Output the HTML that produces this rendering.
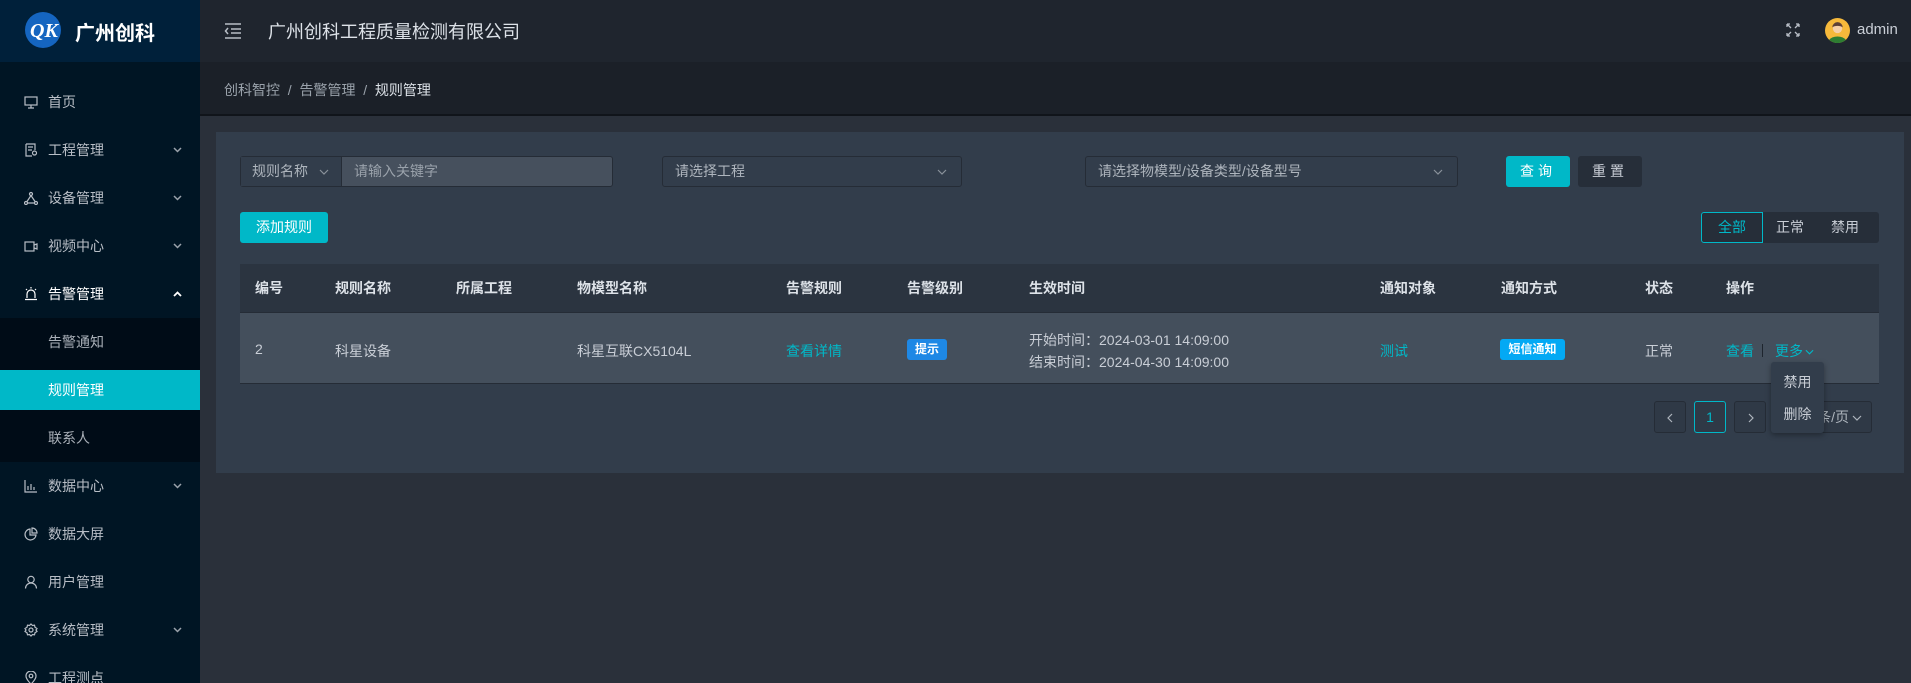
<!DOCTYPE html>
<html style="overflow:hidden"><head><meta charset="utf-8"><style>
*{margin:0;padding:0;box-sizing:border-box}
html,body{width:1911px;height:683px;overflow:hidden}
body{background:#2a303a;font-family:"Liberation Sans","Noto Sans CJK SC",sans-serif;font-size:14px;color:#c9ced6;position:relative}
.a{position:absolute}
.side{left:0;top:0;width:200px;height:683px;background:#001524}
.logo{left:0;top:0;width:200px;height:62px;background:#00203a}
.mi{position:absolute;left:0;width:200px;height:48px;line-height:48px;color:#b8bec6;font-size:14px}
.mi .t{position:absolute;left:48px}
.mi .ic{position:absolute;left:24px;top:17px;width:14px;height:14px}
.mi .ar{position:absolute;left:173px;top:21px;width:9px;height:6px}
.hdr{left:200px;top:0;width:1711px;height:62px;background:#1f252e}
.bc{left:200px;top:62px;width:1711px;height:54px;background:#1b2028;border-bottom:2px solid #10141a}
.card{left:216px;top:132px;width:1688px;height:341px;background:#323d4b}
.inp{border:1px solid #252c36;border-radius:3px;background:#323d4b;height:31px;line-height:29px;color:#aeb5bd;font-size:14px;padding-left:12px}
.th{position:absolute;top:0;line-height:49px;font-weight:bold;color:#dde2e8}
.td{position:absolute;color:#c9ced6}
.pg{position:absolute;top:401px;height:32px;border:1px solid #252c36;border-radius:3px;background:#2f3946;text-align:center;line-height:30px;color:#aeb5bd}
.chev{position:absolute;width:10px;height:6px}
</style></head><body>
<div class="a side"></div>
<div class="a logo">
 <svg class="a" style="left:24px;top:11px" width="38" height="38" viewBox="0 0 38 38"><circle cx="19" cy="19" r="18" fill="#1565c0"/><text x="6" y="26" font-size="20" font-style="italic" font-weight="bold" fill="#fff" font-family="Liberation Serif">QK</text></svg>
 <div class="a" style="left:75px;top:17px;font-size:20px;font-weight:bold;color:#fff">广州创科</div>
</div>
<div class="mi" style="top:78px"><svg class="ic" viewBox="0 0 14 14" fill="none" stroke="#b8bec6" stroke-width="1.2"><rect x="1" y="2" width="12" height="8"/><path d="M4 13h6M7 10v3"/></svg><span class="t">首页</span></div>
<div class="mi" style="top:126px"><svg class="ic" viewBox="0 0 14 14" fill="none" stroke="#b8bec6" stroke-width="1.2"><path d="M2 1h9v6M2 1v12h6M4 4h5M4 7h4"/><circle cx="10.5" cy="10" r="2"/></svg><span class="t">工程管理</span><svg class="ar" viewBox="0 0 9 6" fill="none" stroke="#9aa2ab" stroke-width="1.5"><path d="M1 1l3.5 3.5L8 1"/></svg></div>
<div class="mi" style="top:174px"><svg class="ic" viewBox="0 0 14 14" fill="none" stroke="#b8bec6" stroke-width="1.2"><circle cx="7" cy="3" r="1.5"/><circle cx="2" cy="12" r="1.5"/><circle cx="12" cy="12" r="1.5"/><path d="M7 4.5L3 10.5M7 4.5l4 6M3.5 12h7"/></svg><span class="t">设备管理</span><svg class="ar" viewBox="0 0 9 6" fill="none" stroke="#9aa2ab" stroke-width="1.5"><path d="M1 1l3.5 3.5L8 1"/></svg></div>
<div class="mi" style="top:222px"><svg class="ic" viewBox="0 0 14 14" fill="none" stroke="#b8bec6" stroke-width="1.2"><rect x="1" y="3" width="9" height="9"/><path d="M10 6l3-1v5l-3-1"/></svg><span class="t">视频中心</span><svg class="ar" viewBox="0 0 9 6" fill="none" stroke="#9aa2ab" stroke-width="1.5"><path d="M1 1l3.5 3.5L8 1"/></svg></div>
<div class="mi" style="top:270px;color:#fff"><svg class="ic" viewBox="0 0 14 14" fill="none" stroke="#fff" stroke-width="1.2"><path d="M3 11V7a4 4 0 0 1 8 0v4M1 12.5h12M7 0v1.5M2 2l1 1M12 2l-1 1"/></svg><span class="t">告警管理</span><svg class="ar" viewBox="0 0 9 6" fill="none" stroke="#fff" stroke-width="1.8"><path d="M1 5l3.5-3.5L8 5"/></svg></div>
<div class="a" style="left:0;top:318px;width:200px;height:144px;background:#000c17"></div>
<div class="mi" style="top:318px;color:#a9b0b8"><span class="t">告警通知</span></div>
<div class="mi" style="top:370px;height:40px;line-height:40px;background:#00b8c8;color:#fff"><span class="t">规则管理</span></div>
<div class="mi" style="top:414px;color:#a9b0b8"><span class="t">联系人</span></div>
<div class="mi" style="top:462px"><svg class="ic" viewBox="0 0 14 14" fill="none" stroke="#b8bec6" stroke-width="1.2"><path d="M1 1v12h12M4 11V7M7 11V5M10 11V8"/></svg><span class="t">数据中心</span><svg class="ar" viewBox="0 0 9 6" fill="none" stroke="#9aa2ab" stroke-width="1.5"><path d="M1 1l3.5 3.5L8 1"/></svg></div>
<div class="mi" style="top:510px"><svg class="ic" viewBox="0 0 14 14" fill="none" stroke="#b8bec6" stroke-width="1.2"><path d="M6 2a5.5 5.5 0 1 0 6 6H6z"/><path d="M8 1v5h5a5 5 0 0 0-5-5z"/></svg><span class="t">数据大屏</span></div>
<div class="mi" style="top:558px"><svg class="ic" viewBox="0 0 14 14" fill="none" stroke="#b8bec6" stroke-width="1.2"><circle cx="7" cy="4.5" r="3.2"/><path d="M1.5 13.5a5.5 5.5 0 0 1 11 0"/></svg><span class="t">用户管理</span></div>
<div class="mi" style="top:606px"><svg class="ic" viewBox="0 0 14 14" fill="none" stroke="#b8bec6" stroke-width="1.2"><circle cx="7" cy="7" r="2"/><path d="M7 1l1.5 1.5 2-.3.5 2L13 5.5l-1 1.5 1 1.5-2 1.3-.5 2-2-.3L7 13l-1.5-1.5-2 .3-.5-2L1 8.5 2 7 1 5.5l2-1.3.5-2 2 .3z"/></svg><span class="t">系统管理</span><svg class="ar" viewBox="0 0 9 6" fill="none" stroke="#9aa2ab" stroke-width="1.5"><path d="M1 1l3.5 3.5L8 1"/></svg></div>
<div class="mi" style="top:654px"><svg class="ic" viewBox="0 0 14 14" fill="none" stroke="#b8bec6" stroke-width="1.2"><path d="M7 13s5-4.5 5-8a5 5 0 0 0-10 0c0 3.5 5 8 5 8z"/><circle cx="7" cy="5" r="1.8"/></svg><span class="t">工程测点</span></div>

<div class="a hdr">
 <svg class="a" style="left:24px;top:23px" width="18" height="16" viewBox="0 0 18 16" fill="none" stroke="#b8bec6" stroke-width="1.5"><path d="M1 1h16M7 6h10M7 10h10M1 15h16M4 5L1.5 8 4 11"/></svg>
 <div class="a" style="left:68px;top:18px;font-size:18px;color:#dde2e8">广州创科工程质量检测有限公司</div>
 <svg class="a" style="left:1586px;top:23px" width="14" height="14" viewBox="0 0 14 14" fill="none" stroke="#b8bec6" stroke-width="1.3"><path d="M1 1l4 4M1 1h3M1 1v3M13 1L9 5M13 1h-3M13 1v3M1 13l4-4M1 13h3M1 13v-3M13 13l-4-4M13 13h-3M13 13v-3"/></svg>
 <svg class="a" style="left:1625px;top:18px" width="25" height="25" viewBox="0 0 24 24"><circle cx="12" cy="12" r="12" fill="#f6b93b"/><path d="M4 21a9 6 0 0 1 16 0a12 12 0 0 1-16 0z" fill="#2e7d32"/><circle cx="12" cy="10" r="4.5" fill="#f5d0a9"/><path d="M7 9a5 5 0 0 1 10 0c-2-2-8-2-10 0z" fill="#5d4037"/></svg>
 <div class="a" style="left:1657px;top:21px;font-size:15px;color:#c9ced6">admin</div>
</div>
<div class="a bc"><div class="a" style="left:24px;top:18px;font-size:14px;color:#9aa2ab">创科智控 &nbsp;/&nbsp; 告警管理 &nbsp;/&nbsp; <span style="color:#dde2e8">规则管理</span></div></div>

<div class="a card"></div>
<div class="a inp" style="left:240px;top:156px;width:373px;background:#46505d;padding:0"><div class="a" style="left:0;top:0;width:101px;height:29px;background:#323d4b;border-right:1px solid #252c36;padding-left:11px">规则名称</div><svg class="chev" style="left:78px;top:12px" viewBox="0 0 10 6" fill="none" stroke="#8a929b" stroke-width="1.2"><path d="M1 1l4 4 4-4"/></svg><span class="a" style="left:113px;top:0;color:#9aa2ab">请输入关键字</span></div>
<div class="a inp" style="left:662px;top:156px;width:300px">请选择工程<svg class="chev" style="right:14px;top:12px" viewBox="0 0 10 6" fill="none" stroke="#8a929b" stroke-width="1.2"><path d="M1 1l4 4 4-4"/></svg></div>
<div class="a inp" style="left:1085px;top:156px;width:373px">请选择物模型/设备类型/设备型号<svg class="chev" style="right:14px;top:12px" viewBox="0 0 10 6" fill="none" stroke="#8a929b" stroke-width="1.2"><path d="M1 1l4 4 4-4"/></svg></div>
<div class="a" style="left:1506px;top:156px;width:64px;height:31px;background:#00b8c8;border-radius:3px;color:#fff;text-align:center;line-height:31px;letter-spacing:4px">查询</div>
<div class="a" style="left:1578px;top:156px;width:64px;height:31px;background:#262e39;border-radius:3px;color:#c9ced6;text-align:center;line-height:31px;letter-spacing:4px">重置</div>
<div class="a" style="left:240px;top:212px;width:88px;height:31px;background:#00b8c8;border-radius:3px;color:#fff;text-align:center;line-height:31px">添加规则</div>
<div class="a" style="left:1701px;top:212px;width:178px;height:31px;background:#262e39;border-radius:3px"></div>
<div class="a" style="left:1701px;top:212px;width:62px;height:31px;border:1px solid #00b8c8;border-radius:3px 0 0 3px;color:#00b8c8;text-align:center;line-height:29px">全部</div>
<div class="a" style="left:1776px;top:212px;line-height:31px;color:#c9ced6">正常</div>
<div class="a" style="left:1814px;top:212px;width:62px;text-align:center;line-height:31px;color:#c9ced6">禁用</div>

<div class="a" style="left:240px;top:264px;width:1639px;height:49px;background:#2b3440;border-bottom:1px solid #252c36">
 <span class="th" style="left:15px">编号</span><span class="th" style="left:95px">规则名称</span><span class="th" style="left:216px">所属工程</span><span class="th" style="left:337px">物模型名称</span><span class="th" style="left:546px">告警规则</span><span class="th" style="left:667px">告警级别</span><span class="th" style="left:789px">生效时间</span><span class="th" style="left:1140px">通知对象</span><span class="th" style="left:1261px">通知方式</span><span class="th" style="left:1405px">状态</span><span class="th" style="left:1486px">操作</span>
</div>
<div class="a" style="left:240px;top:313px;width:1639px;height:71px;background:#444f5c;border-bottom:1px solid #252c36">
 <span class="td" style="left:15px;top:28px">2</span><span class="td" style="left:95px;top:28px">科星设备</span><span class="td" style="left:337px;top:28px">科星互联CX5104L</span><span class="td" style="left:546px;top:28px;color:#00b8c8">查看详情</span>
 <span class="td" style="left:667px;top:26px;width:40px;height:21px;background:#1e88e5;border-radius:3px;color:#fff;font-size:12px;font-weight:bold;text-align:center;line-height:21px">提示</span>
 <span class="td" style="left:789px;top:17px">开始时间：2024-03-01 14:09:00</span><span class="td" style="left:789px;top:39px">结束时间：2024-04-30 14:09:00</span>
 <span class="td" style="left:1140px;top:28px;color:#00b8c8">测试</span>
 <span class="td" style="left:1260px;top:26px;width:65px;height:21px;background:#03a9f4;border-radius:3px;color:#fff;font-size:12px;font-weight:bold;text-align:center;line-height:21px">短信通知</span>
 <span class="td" style="left:1405px;top:28px">正常</span>
 <span class="td" style="left:1486px;top:28px;color:#00b8c8">查看</span><span class="td" style="left:1522px;top:31px;width:1px;height:13px;background:#1e252e"></span><span class="td" style="left:1535px;top:28px;color:#00b8c8">更多</span><svg class="chev" style="left:1565px;top:36px;width:9px" viewBox="0 0 10 6" fill="none" stroke="#00b8c8" stroke-width="1.2"><path d="M1 1l4 4 4-4"/></svg>
</div>
<div class="pg" style="left:1654px;width:32px"><svg class="a" style="left:12px;top:11px" width="6" height="10" viewBox="0 0 6 10" fill="none" stroke="#aeb5bd" stroke-width="1.2"><path d="M5 1L1 5l4 4"/></svg></div>
<div class="pg" style="left:1694px;width:32px;border-color:#00b8c8;color:#00b8c8">1</div>
<div class="pg" style="left:1734px;width:32px"><svg class="a" style="left:13px;top:11px" width="6" height="10" viewBox="0 0 6 10" fill="none" stroke="#aeb5bd" stroke-width="1.2"><path d="M1 1l4 4-4 4"/></svg></div>
<div class="pg" style="left:1774px;width:98px;text-align:right;padding-right:22px">10条/页<svg class="a" style="right:9px;top:13px" width="10" height="6" viewBox="0 0 10 6" fill="none" stroke="#aeb5bd" stroke-width="1.2"><path d="M1 1l4 4 4-4"/></svg></div>
<div class="a" style="left:1771px;top:362px;width:53px;height:71px;background:#323d4b;border-radius:3px;box-shadow:0 2px 6px rgba(0,0,0,.35)">
 <div class="a" style="left:0;top:10px;width:53px;text-align:center;color:#c9ced6">禁用</div>
 <div class="a" style="left:0;top:42px;width:53px;text-align:center;color:#c9ced6">删除</div>
</div>
</body></html>
